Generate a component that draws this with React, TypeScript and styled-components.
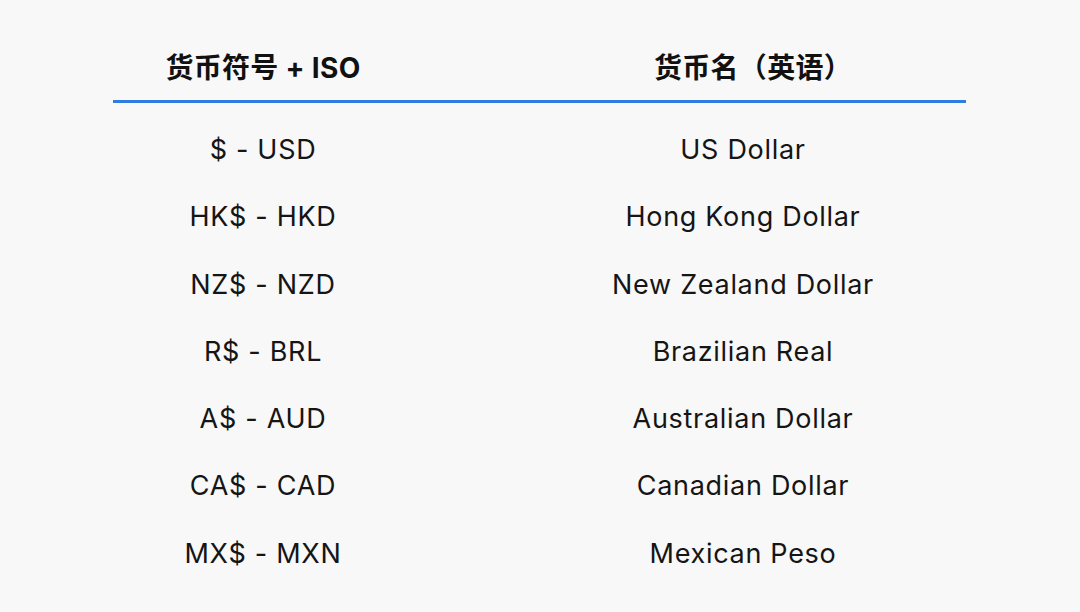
import styled, { createGlobalStyle } from "styled-components";

const rows = [
  { code: "$ - USD", name: "US Dollar" },
  { code: "HK$ - HKD", name: "Hong Kong Dollar" },
  { code: "NZ$ - NZD", name: "New Zealand Dollar" },
  { code: "R$ - BRL", name: "Brazilian Real" },
  { code: "A$ - AUD", name: "Australian Dollar" },
  { code: "CA$ - CAD", name: "Canadian Dollar" },
  { code: "MX$ - MXN", name: "Mexican Peso" },
];

export default function App() {
  return (
    <>
      <GlobalStyle />
      <Page>
        <Table>
          <HeadRow>
            <HeadCell>货币符号 + ISO</HeadCell>
            <HeadCell $offset={20}>货币名（英语）</HeadCell>
          </HeadRow>
          <Body>
            {rows.map((r) => (
              <Row key={r.code}>
                <Cell>{r.code}</Cell>
                <Cell>{r.name}</Cell>
              </Row>
            ))}
          </Body>
        </Table>
      </Page>
    </>
  );
}

const GlobalStyle = createGlobalStyle`
  html, body {
    margin: 0;
    background: #f8f8f8;
  }
  body {
    font-family: Inter, "Noto Sans CJK SC", sans-serif;
    color: #1a1a1a;
  }
`;

const Page = styled.div`
  width: 1080px;
  height: 612px;
  background: #f8f8f8;
  padding: 40px 0 0 113px;
  box-sizing: border-box;
`;

const Table = styled.div`
  width: 853px;
  display: flex;
  flex-direction: column;
`;

const HeadRow = styled.div`
  display: grid;
  grid-template-columns: 300px 446px;
  column-gap: 107px;
  height: 63px;
  border-bottom: 3px solid #2f7de1;
  box-sizing: border-box;
`;

const HeadCell = styled.div<{ $offset?: number }>`
  text-align: center;
  padding-left: ${(p) => p.$offset ?? 0}px;
  font-size: 28px;
  letter-spacing: 0.3px;
  font-weight: 700;
  color: #111;
  line-height: 56px;
`;

const Body = styled.div`
  padding-top: 13px;
`;

const Row = styled.div`
  display: grid;
  grid-template-columns: 300px 446px;
  column-gap: 107px;
  height: 67.3px;
`;

const Cell = styled.div`
  text-align: center;
  font-size: 27px;
  letter-spacing: 0.7px;
  line-height: 67.3px;
  color: #151515;
`;
